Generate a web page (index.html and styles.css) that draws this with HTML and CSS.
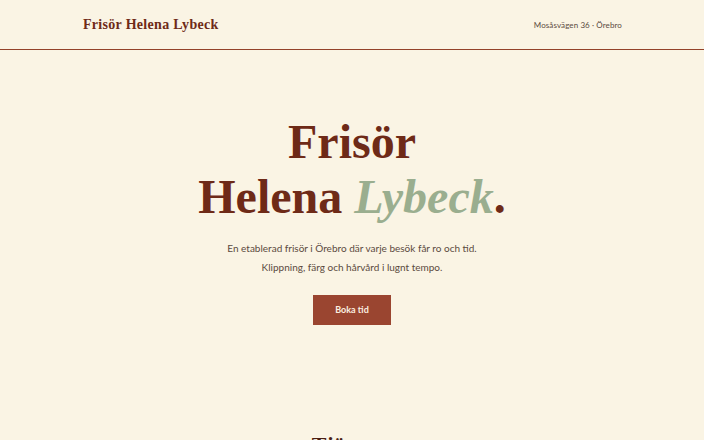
FILE: index.html
```html
<!DOCTYPE html>
<html lang="sv">
<head>
    <meta charset="UTF-8">
    <meta name="viewport" content="width=device-width, initial-scale=1.0">
    <title>Frisör Helena Lybeck</title>
    <link rel="stylesheet" href="styles.css">
</head>
<body>
    <header class="site-header">
        <div class="wrap header-inner">
            <a href="#" class="logo">Frisör Helena Lybeck</a>
            <span class="address">Mosåsvägen 36 · Örebro</span>
        </div>
    </header>

    <section class="hero">
        <h1>Frisör<br>Helena <em>Lybeck</em>.</h1>
        <p>En etablerad frisör i Örebro där varje besök får ro och tid.<br>
        Klippning, färg och hårvård i lugnt tempo.</p>
        <a href="#" class="book-button">Boka tid</a>
    </section>

    <section class="services">
        <h2>Tjänster</h2>
    </section>
</body>
</html>
```

FILE: styles.css
```css
/* Grund */
* {
    margin: 0;
    padding: 0;
    box-sizing: border-box;
}

body {
    background-color: #faf4e4;
    color: #5a4a40;
    font-family: Lato, 'Noto Sans', sans-serif;
}

.wrap {
    max-width: 540px;
    margin: 0 auto;
}

/* Header */
.site-header {
    border-bottom: 1px solid #934229;
}

.header-inner {
    height: 49px;
    display: flex;
    justify-content: space-between;
    align-items: center;
}

.logo {
    font-family: 'Liberation Serif', serif;
    font-weight: 700;
    font-size: 14px;
    color: #6e2a17;
    text-decoration: none;
    letter-spacing: 0.3px;
    margin-left: 1px;
}

.address {
    font-size: 8px;
    color: #5a4a40;
    letter-spacing: 0.1px;
}

/* Hero */
.hero {
    text-align: center;
    padding-top: 64px;
}

.hero h1 {
    font-family: 'Liberation Serif', serif;
    font-weight: 700;
    font-size: 48px;
    line-height: 55px;
    color: #6e2a17;
}

.hero h1 em {
    color: #9aae8f;
}

.hero p {
    margin-top: 15px;
    font-size: 10px;
    line-height: 19px;
    color: #5a4a40;
}

.book-button {
    display: inline-block;
    margin-top: 18px;
    width: 78px;
    height: 30px;
    line-height: 30px;
    background-color: #9a4530;
    color: #fbefe0;
    font-size: 9px;
    font-weight: 700;
    text-decoration: none;
}

/* Tjänster */
.services {
    text-align: center;
    padding-top: 107px;
}

.services h2 {
    font-family: 'Liberation Serif', serif;
    font-weight: 700;
    font-size: 22px;
    color: #4a1e12;
}
```
